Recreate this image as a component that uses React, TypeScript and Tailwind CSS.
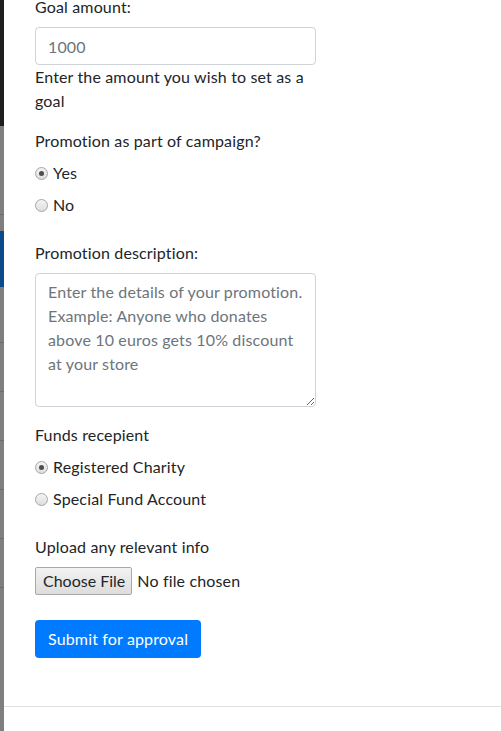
import React from "react";

function Radio({ label, checked }: { label: string; checked?: boolean }) {
  return (
    <label className="flex h-6 items-center gap-[5px]">
      <span className="flex h-[13px] w-[13px] items-center justify-center rounded-full border border-[#a6a6a6] bg-gradient-to-b from-[#f4f4f4] to-[#dedede]">
        {checked && <span className="h-[5px] w-[5px] rounded-full bg-[#4d4d4d]" />}
      </span>
      <span>{label}</span>
    </label>
  );
}

function Strip() {
  const rows = [55, 48, 48, 48, 48, 48];
  return (
    <div className="flex w-[4px] shrink-0 flex-col bg-[#7f7f7f]">
      <div className="h-[126px] bg-[#1e1e1e]" />
      <div className="h-[88px]" />
      <div className="h-px bg-[#6c6c6c]" />
      <div className="h-[16px]" />
      <div className="h-[56px] bg-[#0b4a8a]" />
      {rows.map((h, i) => (
        <React.Fragment key={i}>
          <div style={{ height: h }} />
          <div className="h-px bg-[#6c6c6c]" />
        </React.Fragment>
      ))}
    </div>
  );
}

export default function App() {
  return (
    <div className="flex min-h-[731px] overflow-hidden bg-white font-['Segoe_UI','Lato','Open_Sans',sans-serif] text-base leading-6 tracking-[0.15px] text-[#212529]">
      <Strip />
      <div className="flex flex-1 flex-col">
        <form className="-mt-[5px] w-[312px] pl-[31px]">
          <div className="mb-4">
            <label htmlFor="goal" className="mb-2 block">
              Goal amount:
            </label>
            <input
              id="goal"
              placeholder="1000"
              className="block h-[38px] w-full rounded border border-[#ced4da] px-3 placeholder:text-[#6c757d] focus:outline-none"
            />
            <p>Enter the amount you wish to set as a goal</p>
          </div>

          <div className="mb-6">
            <p className="mb-2">Promotion as part of campaign?</p>
            <div className="flex flex-col gap-2">
              <Radio label="Yes" checked />
              <Radio label="No" />
            </div>
          </div>

          <div className="mb-4">
            <label htmlFor="desc" className="mb-2 block">
              Promotion description:
            </label>
            <textarea
              id="desc"
              rows={5}
              placeholder="Enter the details of your promotion. Example: Anyone who donates above 10 euros gets 10% discount at your store"
              className="block h-[134px] w-full rounded border border-[#ced4da] px-3 py-[6px] placeholder:text-[#6c757d] focus:outline-none"
            />
          </div>

          <div className="mb-6">
            <p className="mb-2">Funds recepient</p>
            <div className="flex flex-col gap-2">
              <Radio label="Registered Charity" checked />
              <Radio label="Special Fund Account" />
            </div>
          </div>

          <div className="mb-[25px]">
            <p className="mb-2">Upload any relevant info</p>
            <div className="flex h-7 items-center gap-[5px]">
              <span className="flex h-7 items-center rounded-[2px] border border-[#a9a9a9] bg-gradient-to-b from-[#f2f2f2] to-[#dddddd] pl-[7px] pr-[6px] tracking-normal">
                Choose File
              </span>
              <span>No file chosen</span>
            </div>
          </div>

          <button
            type="button"
            className="h-[38px] rounded bg-[#007bff] px-[13px] text-white"
          >
            Submit for approval
          </button>
        </form>
        <div className="mt-[48px] h-px bg-[#e0e0e0]" />
      </div>
    </div>
  );
}
